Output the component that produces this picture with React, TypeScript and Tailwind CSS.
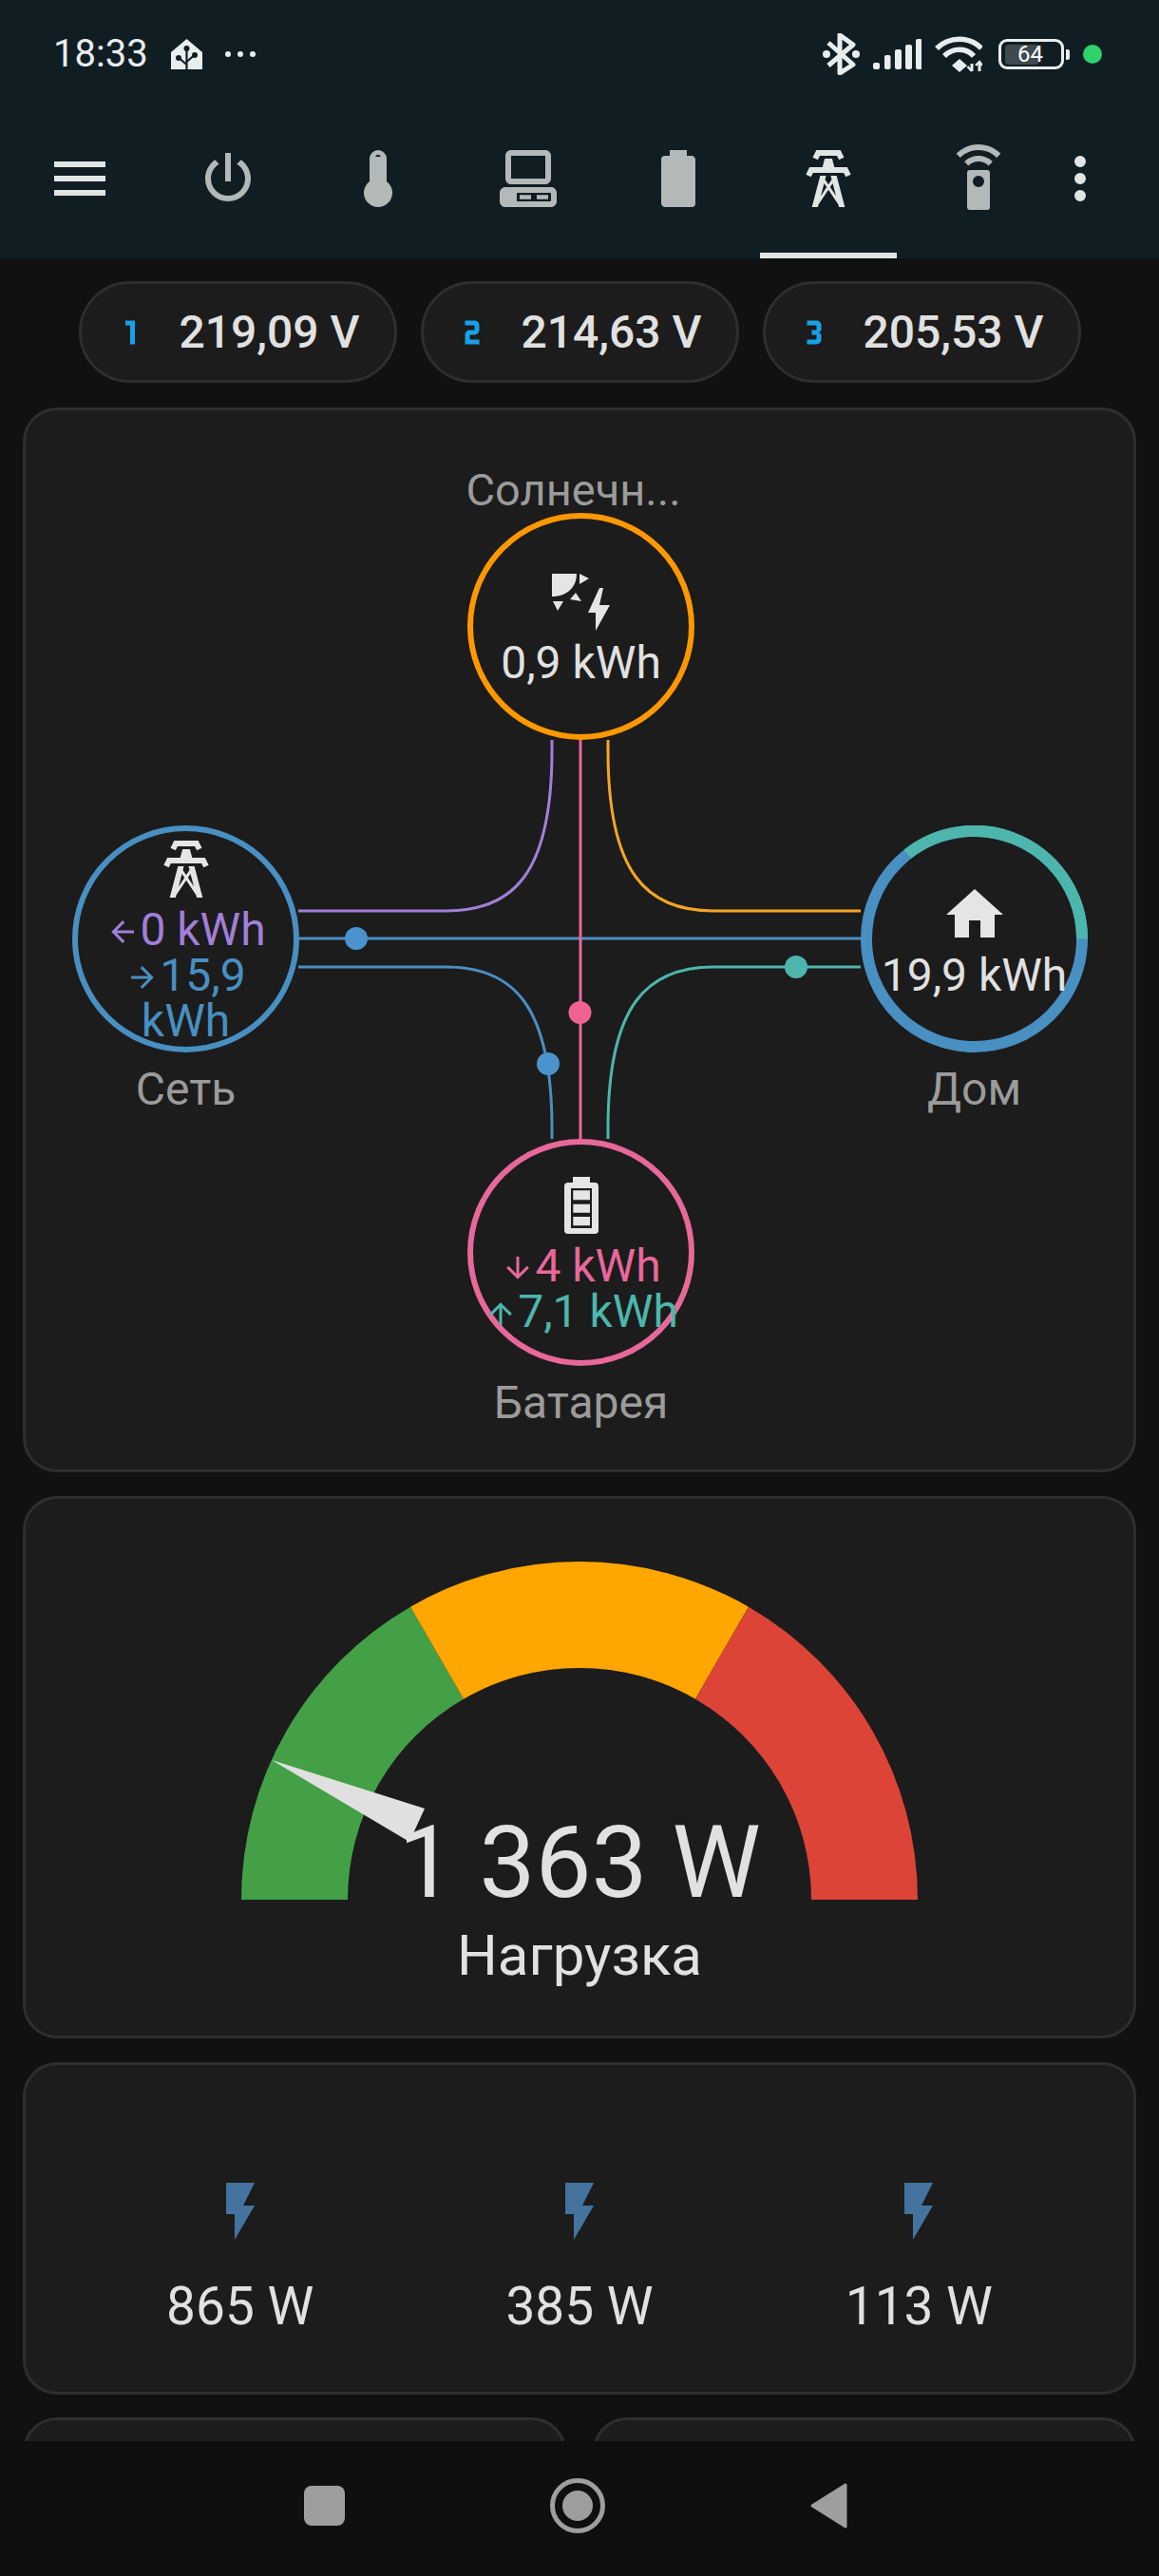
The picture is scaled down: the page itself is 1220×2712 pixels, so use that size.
import type { ReactNode } from "react";

const P = {
  menu: "M3,6H21V8H3V6M3,11H21V13H3V11M3,16H21V18H3V16Z",
  power: "M16.56,5.44L15.11,6.89C16.84,7.94 18,9.83 18,12A6,6 0 0,1 12,18A6,6 0 0,1 6,12C6,9.83 7.16,7.94 8.88,6.88L7.44,5.44C5.36,6.88 4,9.28 4,12A8,8 0 0,0 12,20A8,8 0 0,0 20,12C20,9.28 18.64,6.88 16.56,5.44M13,3H11V13H13",
  thermometer: "M15 13V5A3 3 0 0 0 9 5V13A5 5 0 1 0 15 13M12 3.6A1.3 1.3 0 0 1 13 4.3H11A1.3 1.3 0 0 1 12 3.6Z",
  desktop: "M6,2C4.89,2 4,2.89 4,4V12C4,13.11 4.89,14 6,14H18C19.11,14 20,13.11 20,12V4C20,2.89 19.11,2 18,2H6M6,4H18V12H6V4M4,15C2.89,15 2,15.89 2,17V20C2,21.11 2.89,22 4,22H20C21.11,22 22,21.11 22,20V17C22,15.89 21.11,15 20,15H4M8,17H20V20H8V17M9,17.75V19.25H13V17.75H9M15,17.75V19.25H19V17.75H15Z",
  battery: "M16.67,4H15V2H9V4H7.33A1.33,1.33 0 0,0 6,5.33V20.67C6,21.4 6.6,22 7.33,22H16.67A1.33,1.33 0 0,0 18,20.67V5.33C18,4.6 17.4,4 16.67,4Z",
  tower: "M8.28,5.45L6.5,4.55L7.76,2H16.23L17.5,4.55L15.72,5.44L15,4H9L8.28,5.45M18.62,8H14.09L13.3,5H10.7L9.91,8H5.38L4.1,10.55L5.89,11.44L6.62,10H17.38L18.1,11.45L19.89,10.56L18.62,8M17.77,22H15.7L15.46,21.1L12,15.9L8.53,21.1L8.3,22H6.23L9.12,11H11.19L10.83,12.35L12,14.1L13.16,12.35L12.81,11H14.88L17.77,22M11.4,15L10.5,13.65L9.32,18.13L11.4,15M14.68,18.12L13.5,13.64L12.6,15L14.68,18.12Z",
  remote: "M12,0C8.96,0 6.21,1.23 4.22,3.22L5.63,4.63C7.26,3 9.5,2 12,2C14.5,2 16.74,3 18.36,4.64L19.78,3.22C17.79,1.23 15.04,0 12,0M7.05,6.05L8.46,7.46C9.37,6.56 10.62,6 12,6C13.38,6 14.63,6.56 15.54,7.46L16.95,6.05C15.68,4.78 13.93,4 12,4C10.07,4 8.32,4.78 7.05,6.05M12,15A2,2 0 0,1 10,13A2,2 0 0,1 12,11A2,2 0 0,1 14,13A2,2 0 0,1 12,15M15,9H9A1,1 0 0,0 8,10V22A1,1 0 0,0 9,23H15A1,1 0 0,0 16,22V10A1,1 0 0,0 15,9Z",
  dots: "M12,16A2,2 0 0,1 14,18A2,2 0 0,1 12,20A2,2 0 0,1 10,18A2,2 0 0,1 12,16M12,10A2,2 0 0,1 14,12A2,2 0 0,1 12,14A2,2 0 0,1 10,12A2,2 0 0,1 12,10M12,4A2,2 0 0,1 14,6A2,2 0 0,1 12,8A2,2 0 0,1 10,6A2,2 0 0,1 12,4Z",
  home: "M10,20V14H14V20H19V12H22L12,3L2,12H5V20H10Z",
  flash: "M7,2V13H10V22L17,10H13L17,2H7Z",
  left: "M20,11V13H8L13.5,18.5L12.08,19.92L4.16,12L12.08,4.08L13.5,5.5L8,11H20Z",
  right: "M4,11V13H16L10.5,18.5L11.92,19.92L19.84,12L11.92,4.08L10.5,5.5L16,11H4Z",
  down: "M11,4H13V16L18.5,10.5L19.92,11.92L12,19.84L4.08,11.92L5.5,10.5L11,16V4Z",
  up: "M13,20H11V8L5.5,13.5L4.08,12.08L12,4.16L19.92,12.08L18.5,13.5L13,8V20Z",
  n1: "M14,17H12V9H10V7H14V17Z",
  n2: "M9,7H13A2,2 0 0,1 15,9V11A2,2 0 0,1 13,13H11V15H15V17H9V13A2,2 0 0,1 11,11H13V9H9V7Z",
  n3: "M15,15A2,2 0 0,1 13,17H9V15H13V13H11V11H13V9H9V7H13A2,2 0 0,1 15,9V10.5A1.5,1.5 0 0,1 13.5,12A1.5,1.5 0 0,1 15,13.5V15Z",
};

function Mdi({ d, className }: { d: string; className: string }) {
  return (
    <svg viewBox="0 0 24 24" className={className} fill="currentColor" fillRule="evenodd">
      <path d={d} />
    </svg>
  );
}

function StatusBar() {
  return (
    <div className="flex h-[114px] items-center pl-[56px] pr-[60px] text-[#e8eded]">
      <span className="w-[124px] text-[40px] leading-[48px]">18:33</span>
      {/* Home Assistant logo */}
      <svg viewBox="0 0 33 32" className="h-[32px] w-[33px]">
        <path d="M16.5 0L33 14V32H0V14Z" fill="currentColor" />
        <path d="M16.5 8V32M16.5 27L9.500 21M16.5 24L23.500 18" stroke="#101e24" strokeWidth="2.2" fill="none" />
        <circle cx="16.500" cy="10" r="3" fill="#101e24" />
        <circle cx="8" cy="20" r="3" fill="#101e24" />
        <circle cx="25" cy="17" r="3" fill="#101e24" />
      </svg>
      <div className="ml-[24px] flex gap-[7px]">
        <div className="h-[6px] w-[6px] rounded-full bg-[#e8eded]" />
        <div className="h-[6px] w-[6px] rounded-full bg-[#e8eded]" />
        <div className="h-[6px] w-[6px] rounded-full bg-[#e8eded]" />
      </div>
      <div className="ml-auto flex items-center">
        <svg viewBox="866 35 40 44" className="h-[44px] w-[40px]" fill="none">
          <path d="M872 45L898 68L884 77V37L898 47L872 69" stroke="currentColor" strokeWidth="5" strokeLinejoin="round" />
          <circle cx="870" cy="57" r="4" fill="currentColor" />
          <circle cx="901" cy="57" r="4" fill="currentColor" />
        </svg>
        <svg viewBox="919 41 51 32" className="ml-[13px] h-[32px] w-[51px]" fill="currentColor">
          <rect x="919" y="66" width="7" height="7" rx="2" />
          <rect x="931" y="58" width="6.5" height="15" rx="2" />
          <rect x="942" y="52" width="7" height="21" rx="2" />
          <rect x="953" y="47" width="7" height="26" rx="2" />
          <rect x="964" y="41" width="6.5" height="32" rx="2" />
        </svg>
        <svg viewBox="984 38 50 38" className="ml-[14px] h-[38px] w-[50px]" fill="none" stroke="currentColor" strokeWidth="5.5">
          <path d="M986 51C999 38 1021 38 1033 51" />
          <path d="M994 59C1003 50 1017 50 1025 59" />
          <path d="M1010 62L1018 69L1010 76L1002 69Z" fill="currentColor" stroke="none" />
          <path d="M1023 67V75M1031 65V75" strokeWidth="3" />
          <path d="M1018.500 70L1023 75M1027 69L1031 65L1034 69" strokeWidth="2.4" />
        </svg>
        {/* battery */}
        <div className="relative ml-[17px] flex h-[32px] w-[69px] items-center rounded-[9px] border-[3px] border-[#e8eded] pl-[4px]">
          <div className="h-[21px] w-[36px] rounded-[4px] bg-[#3f4a50]" />
          <span className="absolute left-[17px] top-[1px] text-[24px] leading-[24px] text-white">64</span>
        </div>
        <div className="ml-[2px] h-[11px] w-[4px] rounded-r-[2px] bg-[#e8eded]" />
        <div className="ml-[14px] h-[20px] w-[20px] rounded-full bg-[#2fd26b]" />
      </div>
    </div>
  );
}

function Tab({ d, active }: { d: string; active?: boolean }) {
  return (
    <div className="relative flex h-full w-[158px] justify-center pt-[38px]">
      <Mdi d={d} className={active ? "h-[72px] w-[72px] text-[#e1e5e4]" : "h-[72px] w-[72px] text-[#b3b8b8]"} />
      {active && <div className="absolute bottom-0 left-[7px] h-[6px] w-[144px] bg-[#e1e5e4]" />}
    </div>
  );
}

function Chip({ d, value }: { d: string; value: string }) {
  return (
    <div className="flex h-[107px] w-[335px] items-center rounded-full border-[3px] border-[#2e2e2e] bg-[#1c1c1c] pl-[21px]">
      <Mdi d={d} className="h-[60px] w-[60px] text-[#16a2e8]" />
      <span className="ml-[22px] text-[48px] font-medium leading-[56px] text-[#e1e1e1]">{value}</span>
    </div>
  );
}

function Arrow({ d }: { d: string }) {
  return <Mdi d={d} className="mb-[2px] inline-block h-[36px] w-[36px] align-middle" />;
}

function Node({ pos, ring, label, children }: { pos: string; ring?: ReactNode; label?: ReactNode; children: ReactNode }) {
  return (
    <div className={`absolute h-[239px] w-[239px] ${pos}`}>
      {ring}
      <div className="relative flex h-full flex-col items-center justify-center whitespace-nowrap text-[48px] leading-[48px] text-[#e1e1e1]">
        {children}
      </div>
      {label}
    </div>
  );
}

function BottomLabel({ text, top }: { text: string; top: string }) {
  return <div className={`absolute left-0 w-full text-center text-[48px] leading-[56px] text-[#9b9b9b] ${top}`}>{text}</div>;
}

function EnergyFlow() {
  return (
    <div className="relative mx-[24px] mt-[26px] h-[1121px] rounded-[36px] border-[3px] border-[#2e2e2e] bg-[#1c1c1c]">
      {/* lines between the nodes */}
      <svg viewBox="27 432 1167 1115" className="absolute left-0 top-0 h-[1115px] w-[1167px]" fill="none" strokeWidth="3">
        <path d="M581 779V790C581 920 540 959 470 959H314" stroke="#a27fd8" />
        <path d="M640 779V790C640 920 681 959 751 959H906" stroke="#f5a623" />
        <path d="M581 1199V1188C581 1058 540 1018 470 1018H314" stroke="#488fc2" />
        <path d="M640 1199V1188C640 1058 681 1018 751 1018H906" stroke="#4db6ac" />
        <path d="M314 988H906" stroke="#488fc2" />
        <path d="M611 779V1199" stroke="#e8689a" />
        <circle cx="375" cy="988" r="12" fill="#4b93cc" />
        <circle cx="838" cy="1018" r="12" fill="#4db6ac" />
        <circle cx="610.500" cy="1066" r="12" fill="#f06292" />
        <circle cx="577" cy="1120" r="12" fill="#4b93cc" />
      </svg>

      <Node
        pos="left-[465px] top-[108px] rounded-full border-[6px] border-[#ff9800]"
        label={<div className="absolute -left-[8px] -top-[58px] w-full text-center text-[47px] leading-[56px] text-[#9b9b9b]">Солнечн...</div>}
      >
        <svg viewBox="575 596 72 72" className="h-[72px] w-[72px]" fill="#e5e5e5">
          <path d="M580 602H606C606 616 596 626 580 626Z" />
          <path d="M609 602L619 607L609 613ZM605 622L611 631L599 629ZM581 631H592L586 641Z" />
          <path d="M630 617L618 643H626L626 662L641 635H630L634 617Z" />
        </svg>
        <div className="mt-[4px]">0,9 kWh</div>
      </Node>

      <Node pos="left-[49px] top-[437px] rounded-full border-[6px] border-[#488fc2]" label={<BottomLabel text="Сеть" top="top-[244px]" />}>
        <Mdi d={P.tower} className="h-[72px] w-[72px] text-[#e5e5e5]" />
        <div className="mt-[4px] text-center">
          <div className="text-[#a27fd8]"><Arrow d={P.left} />0 kWh</div>
          <div className="text-[#488fc2]"><Arrow d={P.right} />15,9<br />kWh</div>
        </div>
      </Node>

      <Node
        pos="left-[879px] top-[437px]"
        label={<BottomLabel text="Дом" top="top-[250px]" />}
        ring={
          <svg viewBox="906 868 240 240" className="absolute inset-0 h-[239px] w-[239px]" fill="none" strokeWidth="12">
            <circle cx="1026" cy="988" r="114" stroke="#488fc2" />
            <path d="M955.400 898.200A114 114 0 0 1 1140 988" stroke="#4db6ac" />
          </svg>
        }
      >
        <Mdi d={P.home} className="h-[72px] w-[72px] text-[#e5e5e5]" />
        <div className="mt-[4px]">19,9 kWh</div>
      </Node>

      <Node pos="left-[465px] top-[767px] rounded-full border-[6px] border-[#e8689a]" label={<BottomLabel text="Батарея" top="top-[244px]" />}>
        <svg viewBox="0 0 72 72" className="h-[72px] w-[72px]" fill="#e5e5e5" fillRule="evenodd">
          <path d="M50 12H45V6H27V12H22A4 4 0 0 0 18 16V62A4 4 0 0 0 22 66H50A4 4 0 0 0 54 62V16A4 4 0 0 0 50 12ZM25 18H47V60H25ZM27.300 20.300V30.300H45V20.300ZM27.300 34.700V43.700H45V34.700ZM27.300 48V57.300H45V48Z" />
        </svg>
        <div className="mt-[4px] text-center">
          <div className="text-[#e8689a]"><Arrow d={P.down} />4 kWh</div>
          <div className="text-[#4db6ac]"><Arrow d={P.up} />7,1 kWh</div>
        </div>
      </Node>
    </div>
  );
}

function Gauge() {
  return (
    <div className="mx-[24px] mt-[25px] flex h-[571px] flex-col items-center rounded-[36px] border-[3px] border-[#2e2e2e] bg-[#1c1c1c] pt-[66px] text-[#e1e1e1]">
      <svg viewBox="255 1644 712 356" className="h-[356px] w-[712px] shrink-0">
        <path d="M255 2000A356 356 0 0 1 433 1691.700L489 1788.700A244 244 0 0 0 367 2000Z" fill="#43a047" />
        <path d="M433 1691.700A356 356 0 0 1 789 1691.700L733 1788.700A244 244 0 0 0 489 1788.700Z" fill="#ffa600" />
        <path d="M789 1691.700A356 356 0 0 1 967 2000H855A244 244 0 0 0 733 1788.700Z" fill="#db4437" />
        <path d="M287 1853L448 1904L432 1939Z" fill="#e0e0e0" />
      </svg>
      <div className="relative -mt-[91px] text-[105px] leading-[105px]">1 363 W</div>
      <div className="mt-[15px] text-[60px] leading-[60px]">Нагрузка</div>
    </div>
  );
}

function Phases() {
  const values = ["865 W", "385 W", "113 W"];
  return (
    <div className="mx-[24px] mt-[25px] grid h-[350px] grid-cols-3 rounded-[36px] border-[3px] border-[#2e2e2e] bg-[#1c1c1c] px-[47px] pt-[118px]">
      {values.map((v) => (
        <div key={v} className="flex flex-col items-center">
          <Mdi d={P.flash} className="h-[72px] w-[72px] text-[#44739e]" />
          <div className="mt-[36px] text-[55px] leading-[56px] text-[#e1e1e1]">{v}</div>
        </div>
      ))}
    </div>
  );
}

function NavBar() {
  return (
    <div className="absolute bottom-0 left-0 flex h-[142px] w-full items-center gap-[216px] bg-[#0f0f0f] pb-[6px] pl-[320px]">
      <div className="h-[42px] w-[43px] rounded-[8px] bg-[#9e9e9e]" />
      <div className="flex h-[58px] w-[58px] items-center justify-center rounded-full border-[5px] border-[#9e9e9e]">
        <div className="h-[32px] w-[32px] rounded-full bg-[#9e9e9e]" />
      </div>
      <svg viewBox="0 0 39 48" className="h-[48px] w-[39px]" fill="#9e9e9e" stroke="#9e9e9e" strokeWidth="3" strokeLinejoin="round">
        <path d="M37 2V46L2 24Z" />
      </svg>
    </div>
  );
}

export default function App() {
  return (
    <div className="relative h-[2712px] w-[1220px] overflow-hidden bg-[#111111] [font-family:Roboto,sans-serif]">
      <div className="h-[272px] bg-[#101e24]">
        <StatusBar />
        <div className="flex h-[158px] items-start">
          <div className="w-[161px] pl-[48px] pt-[38px]">
            <Mdi d={P.menu} className="h-[72px] w-[72px] text-[#e1e5e4]" />
          </div>
          <Tab d={P.power} />
          <Tab d={P.thermometer} />
          <Tab d={P.desktop} />
          <Tab d={P.battery} />
          <Tab d={P.tower} active />
          <Tab d={P.remote} />
          <div className="-ml-[8px] pt-[38px]">
            <Mdi d={P.dots} className="h-[72px] w-[72px] text-[#e1e5e4]" />
          </div>
        </div>
      </div>

      <div className="flex justify-center gap-[25px] pt-[24px]">
        <Chip d={P.n1} value="219,09 V" />
        <Chip d={P.n2} value="214,63 V" />
        <Chip d={P.n3} value="205,53 V" />
      </div>

      <EnergyFlow />
      <Gauge />
      <Phases />

      <div className="mx-[24px] mt-[24px] grid grid-cols-2 gap-[28px]">
        <div className="h-[120px] rounded-[36px] border-[3px] border-[#2e2e2e] bg-[#1c1c1c]" />
        <div className="h-[120px] rounded-[36px] border-[3px] border-[#2e2e2e] bg-[#1c1c1c]" />
      </div>

      <NavBar />
    </div>
  );
}
